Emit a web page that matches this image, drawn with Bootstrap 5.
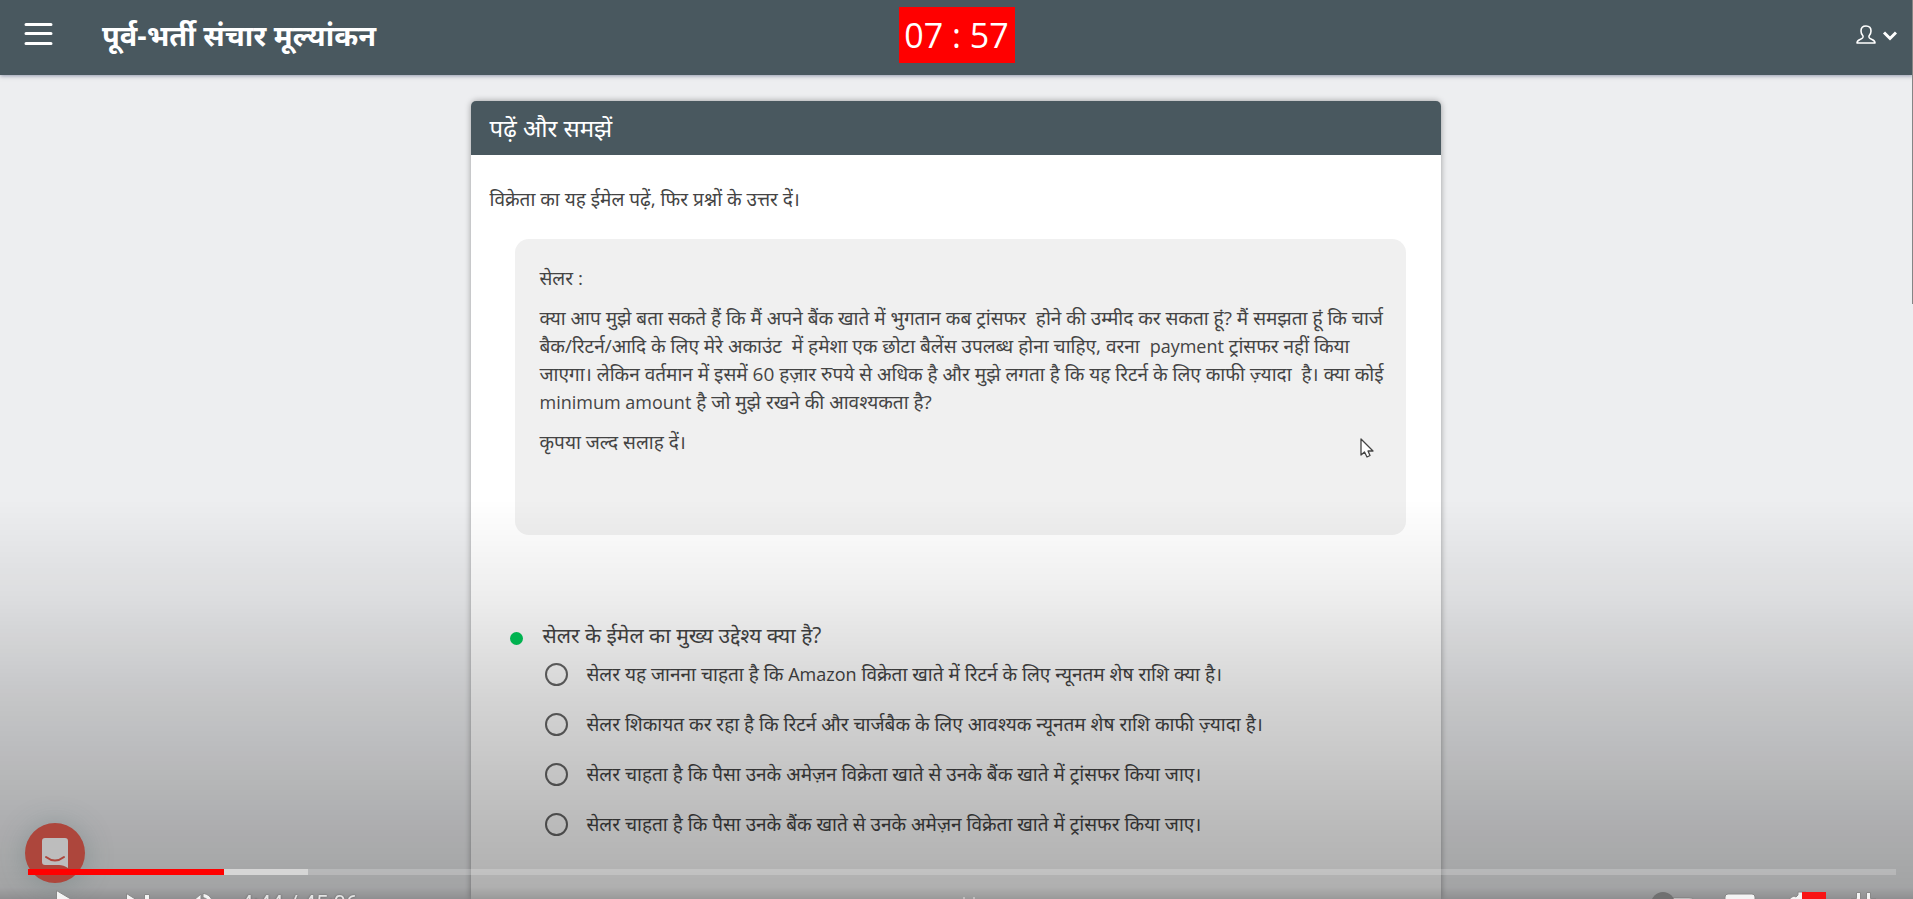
<!DOCTYPE html>
<html lang="hi">
<head>
<meta charset="utf-8">
<meta name="viewport" content="width=device-width, initial-scale=1">
<title>पूर्व-भर्ती संचार मूल्यांकन</title>
<link href="https://cdn.jsdelivr.net/npm/bootstrap@5.3.0/dist/css/bootstrap.min.css" rel="stylesheet">
<script src="https://cdn.jsdelivr.net/npm/bootstrap@5.3.0/dist/js/bootstrap.bundle.min.js" defer></script>
<style>
  body { font-family: "Open Sans", "Noto Sans", sans-serif; font-size: 19px; line-height: 28px; color: #444; background: #edeef0; }
  [lang="en"] { font-size: 18px; }
  .slate { background: #49585f; color: #fff; }
  .topbar { height: 75px; padding: 0 16px; box-shadow: 0 1px 4px rgba(60, 70, 110, .5); }
  .topbar .title { font-size: 29px; line-height: 38px; font-weight: 700; }
  .side { flex: 1 1 0; }
  .menu-btn { margin-left: 8px; }
  .timer { background: #f00; color: #fff; font-size: 34px; line-height: 56px; width: 116px; margin-top: 7px; }
  .stage { padding: 26px 2px 0 0; }
  .sheet { width: 970px; max-width: 100%; min-height: calc(100vh - 101px); border-radius: 6px 6px 0 0; box-shadow: 0 0 6px rgba(0, 0, 0, .35); }
  .sheet-head { font-size: 24px; line-height: 54px; border-radius: 5px 5px 0 0; padding: 0 19px; }
  .sheet-body { padding: 30px 19px; }
  .mail { background: #f0f0f0; border-radius: 14px; margin: 26px 16px 0 25px; padding: 25px 20px 25px 25px; min-height: 296px; }
  .mail p { margin-bottom: 12px; }
  .pointer { right: 32px; bottom: 77px; }
  .quiz { margin: 86px 0 0 20px; }
  .dot { width: 13px; height: 13px; margin-top: 6px; background: #00c95a; }
  .question { font-size: 21px; line-height: 28px; gap: 20px; }
  .choices { margin-left: 35px; }
  .choice { min-height: 50px; gap: 19px; }
  .choice input { appearance: none; width: 23px; height: 23px; border: 2px solid #666; border-radius: 50%; margin: 0; flex: none; }
  .shade { height: 400px; pointer-events: none; background: linear-gradient(transparent, rgba(0, 0, 0, .07) 25%, rgba(0, 0, 0, .17) 50%, rgba(0, 0, 0, .27) 82%, rgba(0, 0, 0, .31) 97%, rgba(0, 0, 0, .4)); }
  .chat { width: 60px; height: 60px; left: 25px; bottom: 16px; background: #ad463c; box-shadow: 0 2px 28px rgba(70, 100, 100, .35); z-index: 1031; }
  .player { padding: 0 17px 0 28px; z-index: 1032; }
  .track { height: 6px; background: rgba(255, 255, 255, .2); }
  .track .played { background: #f00; }
  .track .loaded { background: #d6d6d6; }
  .controls { height: 24px; padding: 0 12px 0 18px; }
  .controls button { border: 0; padding: 14px 0 0; background: none; line-height: 1; }
  .controls svg { display: block; fill: #f4f4f4; stroke: #888; stroke-width: 1; }
  .left-tools { gap: 30px; }
  .right-tools { gap: 22px; }
  .clock { font-family: Roboto, sans-serif; font-size: 22px; line-height: 22px; margin: 18px 0 0 -15px; color: #e4e4e4; text-shadow: 0 0 2px #555; }
  .thumb { width: 1px; height: 304px; background: #858585; z-index: 1033; }
</style>
</head>
<body class="vh-100 overflow-hidden">
<header class="topbar slate d-flex align-items-start">
  <div class="side d-flex align-items-start">
    <button class="menu-btn btn p-0 border-0 text-white lh-1 mt-3 pt-1" type="button" aria-label="Menu">
      <svg width="30" height="28" viewBox="0 0 30 28" stroke="#fff" stroke-width="3" stroke-linecap="round"><path d="M2 4.500H27M2 13.500H27M2 23.500H27"/></svg>
    </button>
    <h1 class="title mb-0 ms-5 mt-3">पूर्व-भर्ती संचार मूल्यांकन</h1>
  </div>
  <div class="timer text-center">07 : 57</div>
  <div class="side d-flex justify-content-end align-items-start">
    <button class="btn p-0 border-0 lh-1 mt-4" type="button" aria-label="Account">
      <svg width="42" height="22" viewBox="0 0 42 22" fill="none" stroke="#fff"><path stroke-width="1.600" stroke-linejoin="round" d="M11 2C7.500 2 6 4 6 7c0 2.500 1 4 2 5 .5 2-.5 2.500-3 3.500C2.500 16.500 2 17 2 19h18c0-2-.5-2.500-3-3.500S13.500 14 14 12c1-1 2-2.500 2-5 0-3-1.500-5-5-5z"/><path stroke-width="3" d="M29 8.500l6 6 6-6"/></svg>
    </button>
  </div>
</header>

<div class="stage">
<main class="sheet bg-white mx-auto">
  <h2 class="sheet-head slate fw-normal mb-0">पढ़ें और समझें</h2>
  <div class="sheet-body">
    <p class="mb-0">विक्रेता का यह ईमेल पढ़ें, फिर प्रश्नों के उत्तर दें।</p>
    <article class="mail position-relative">
      <p>सेलर :</p>
      <p>क्या आप मुझे बता सकते हैं कि मैं अपने बैंक खाते में भुगतान कब ट्रांसफर&nbsp; होने की उम्मीद कर सकता हूं? मैं समझता हूं कि चार्ज बैक/रिटर्न/आदि के लिए मेरे अकाउंट&nbsp; में हमेशा एक छोटा बैलेंस उपलब्ध होना चाहिए, वरना&nbsp; <span lang="en">payment</span> ट्रांसफर नहीं किया जाएगा। लेकिन वर्तमान में इसमें 60 हज़ार रुपये से अधिक है और मुझे लगता है कि यह रिटर्न के लिए काफी ज़्यादा&nbsp; है। क्या कोई <span lang="en">minimum amount</span> है जो मुझे रखने की आवश्यकता है?</p>
      <p>कृपया जल्द सलाह दें।</p>
      <svg class="pointer position-absolute" width="14" height="20" viewBox="0 0 14 20" fill="#fff" stroke="#444" stroke-width="1.300" stroke-linejoin="round"><path d="M1 1v16l3.500-3 2.500 5 3-1.500-2-4.500h5z"/></svg>
    </article>
    <fieldset class="quiz">
      <legend class="question d-flex align-items-center mb-0"><span class="dot rounded-circle"></span><span>सेलर के ईमेल का मुख्य उद्देश्य क्या है?</span></legend>
      <div class="choices">
        <label class="choice d-flex align-items-center"><input type="radio" name="purpose"><span>सेलर यह जानना चाहता है कि <span lang="en">Amazon</span> विक्रेता खाते में रिटर्न के लिए न्यूनतम शेष राशि क्या है।</span></label>
        <label class="choice d-flex align-items-center"><input type="radio" name="purpose"><span>सेलर शिकायत कर रहा है कि रिटर्न और चार्जबैक के लिए आवश्यक न्यूनतम शेष राशि काफी ज़्यादा है।</span></label>
        <label class="choice d-flex align-items-center"><input type="radio" name="purpose"><span>सेलर चाहता है कि पैसा उनके अमेज़न विक्रेता खाते से उनके बैंक खाते में ट्रांसफर किया जाए।</span></label>
        <label class="choice d-flex align-items-center"><input type="radio" name="purpose"><span>सेलर चाहता है कि पैसा उनके बैंक खाते से उनके अमेज़न विक्रेता खाते में ट्रांसफर किया जाए।</span></label>
      </div>
    </fieldset>
  </div>
</main>
</div>

<div class="shade fixed-bottom"></div>
<div class="thumb position-fixed top-0 end-0"></div>

<button class="chat btn rounded-circle position-fixed border-0 p-0 d-flex align-items-center justify-content-center" type="button" aria-label="Chat">
  <svg width="28" height="32" viewBox="0 0 28 32"><path fill="#bdbdbd" d="M4 1h20a3 3 0 0 1 3 3v27c-3-2-6-3-9-3H4a3 3 0 0 1-3-3V4a3 3 0 0 1 3-3z"/><path d="M5 20q9 7 18 0" fill="none" stroke="#ad463c" stroke-width="2" stroke-linecap="round"/></svg>
</button>

<div class="player fixed-bottom">
  <div class="track d-flex"><div class="played" style="width:10.5%"></div><div class="loaded" style="width:4.5%"></div></div>
  <div class="controls d-flex justify-content-between overflow-hidden position-relative">
    <div class="left-tools d-flex align-items-start">
      <button type="button" aria-label="Play"><svg width="40" height="36" viewBox="0 0 40 36"><path d="M10.500 1.500v28L34 15.500z"/></svg></button>
      <button type="button" aria-label="Next"><svg width="40" height="36" viewBox="0 0 40 36"><path d="M10.500 4.500v22L28 15.500zM28.500 5.500h5v21h-5z"/></svg></button>
      <button type="button" aria-label="Mute"><svg width="40" height="36" viewBox="0 0 40 36"><path d="M3 11h5l7-6v26l-7-8H3zM17 4.500c5 0 10 5 10 11h-4c0-4-2-6-6-7z"/></svg></button>
      <span class="clock text-nowrap">4:44 / 45:06</span>
    </div>
    <svg class="position-absolute bottom-0 start-50" width="16" height="2" viewBox="0 0 16 2"><path d="M1 1h2M11 1h2" stroke="#ddd"/></svg>
    <div class="right-tools d-flex align-items-start">
      <button type="button" aria-label="Autoplay"><svg width="50" height="36" viewBox="0 0 50 36"><rect x="12" y="8.500" width="37" height="16" rx="8" fill="#bbb"/><circle cx="15" cy="15" r="12" fill="#707070" stroke="none"/></svg></button>
      <button type="button" aria-label="Captions"><svg width="40" height="36" viewBox="0 0 40 36"><rect x="5" y="5" width="30" height="24" rx="3"/></svg></button>
      <button type="button" aria-label="Settings"><svg width="40" height="36" viewBox="0 0 40 36" overflow="visible"><path d="M8 9l4-2 2 1 2-2V3h8v26H10z"/><path d="M20 3h24v14H20z" fill="#f81414" stroke="none"/></svg></button>
      <button type="button" aria-label="Full screen"><svg width="40" height="36" viewBox="0 0 40 36"><path d="M12.500 3.500h4v10h-10v-4h6zM22.500 3.500h4v6h6v4h-10z"/></svg></button>
    </div>
  </div>
</div>
</body>
</html>
